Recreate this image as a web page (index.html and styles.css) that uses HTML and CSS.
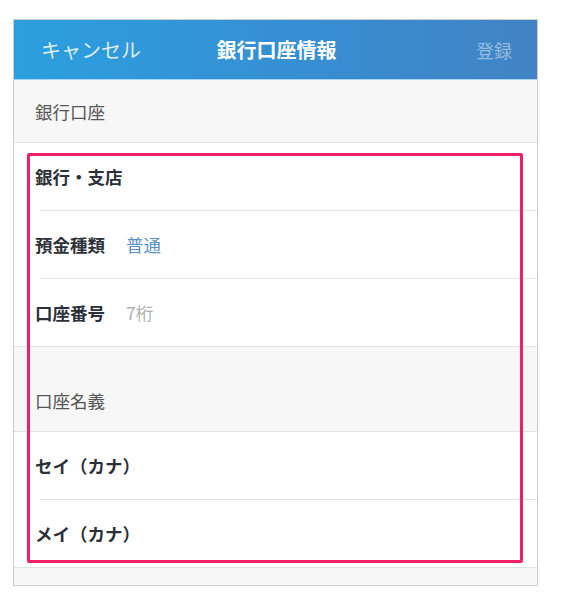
FILE: index.html
```html
<!DOCTYPE html>
<html>
<head>
  <meta charset="utf-8">
  <title>銀行口座情報</title>
  <link rel="stylesheet" href="styles.css">
</head>
<body>
  <div id="screen">
    <div id="navbar">
      <span class="nav-cancel">キャンセル</span>
      <span class="nav-title">銀行口座情報</span>
      <span class="nav-save">登録</span>
    </div>

    <div class="section first">銀行口座</div>
    <div class="row inset"><span class="label">銀行・支店</span></div>
    <div class="row inset"><span class="label">預金種類</span><span class="value blue">普通</span></div>
    <div class="row"><span class="label">口座番号</span><span class="value hint">7桁</span></div>

    <div class="section second">口座名義</div>
    <div class="row inset"><span class="label">セイ（カナ）</span></div>
    <div class="row"><span class="label">メイ（カナ）</span></div>

    <div class="footer-space"></div>

    <!-- highlight box drawn over the form -->
    <div id="highlight"></div>
  </div>
</body>
</html>
```

FILE: styles.css
```css
body {
  margin: 0;
  padding: 19px 0 0 13px;
  background: #fff;
  font-family: "Noto Sans CJK JP", "Noto Sans", sans-serif;
}

#screen {
  position: relative;
  width: 525px;
  box-sizing: border-box;
  border: 1px solid #cfcfcf;
  background: #fff;
}

#navbar {
  height: 60px;
  box-sizing: border-box;
  display: grid;
  grid-template-columns: 1fr auto 1fr;
  align-items: center;
  padding: 0 25px 0 27px;
  background: linear-gradient(90deg, #2b9fdf 0%, #3590d3 50%, #4283c4 100%);
  border-bottom: 1px solid #a9d6f2;
}

.nav-cancel {
  font-size: 20px;
  color: rgba(255, 255, 255, 0.85);
}

.nav-title {
  font-size: 20px;
  font-weight: 700;
  color: #fff;
}

.nav-save {
  justify-self: end;
  font-size: 18px;
  color: rgba(255, 255, 255, 0.45);
}

.section {
  display: flex;
  background: #f7f7f7;
  padding-left: 21px;
  font-size: 17.5px;
  color: #555;
  border-bottom: 1px solid #e3e3e3;
}

.section.first {
  height: 62px;
  align-items: center;
}

.section.second {
  height: 85px;
  box-sizing: border-box;
  align-items: flex-end;
  padding-bottom: 18px;
}

.row {
  height: 67px;
  display: flex;
  align-items: center;
  padding-left: 21px;
  font-size: 17.5px;
  border-bottom: 1px solid #e3e3e3;
  position: relative;
}

.row.inset {
  border-bottom: none;
  margin-bottom: 1px;
}

.row.inset::after {
  content: "";
  position: absolute;
  left: 26px;
  right: 0;
  bottom: -1px;
  height: 1px;
  background: #e3e3e3;
}

.label {
  font-weight: 700;
  color: #2c3038;
}

.value {
  margin-left: 21px;
}

.value.blue {
  color: #5a90c8;
}

.value.hint {
  color: #b0b0b0;
}

.footer-space {
  height: 17px;
  background: #f7f7f7;
}

#highlight {
  position: absolute;
  left: 13px;
  top: 133px;
  width: 496px;
  height: 410px;
  box-sizing: border-box;
  border: 3px solid #f01f68;
  border-radius: 2px;
}
```
